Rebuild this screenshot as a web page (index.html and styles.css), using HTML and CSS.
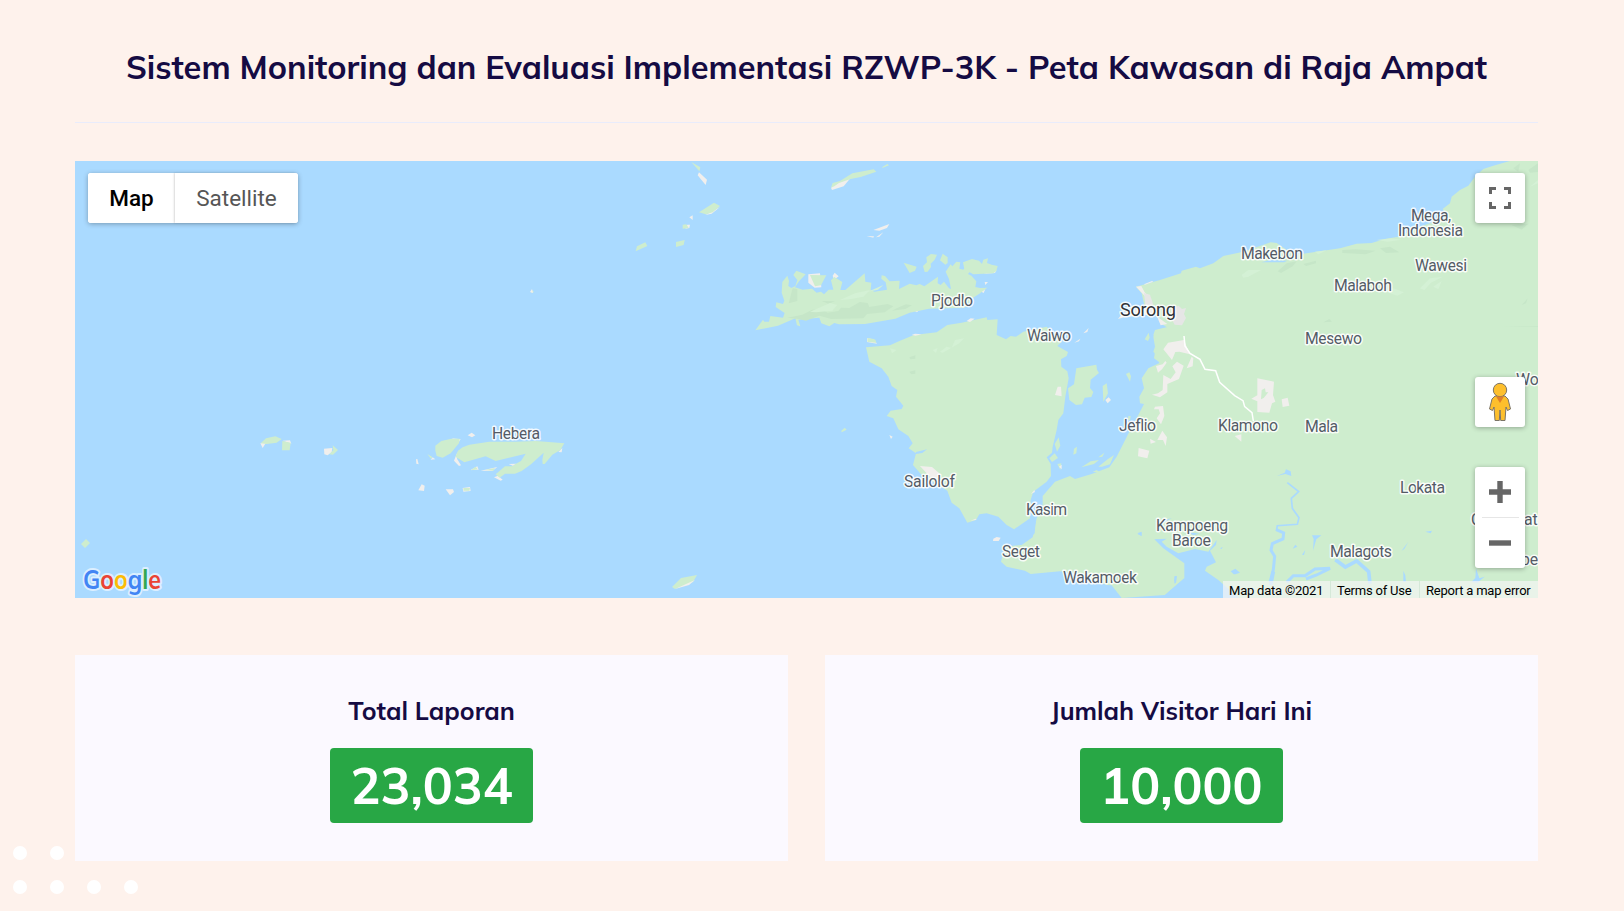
FILE: index.html
```html
<!DOCTYPE html>
<html lang="id">
<head>
<meta charset="utf-8">
<title>Peta Kawasan di Raja Ampat</title>
<link rel="stylesheet" href="styles.css">
</head>
<body>
<div class="dots"><i></i><i></i><i class="off"></i><i class="off"></i><i></i><i></i><i></i><i></i></div>
<main class="page">
  <h1 class="title"><span>Sistem Monitoring dan Evaluasi Implementasi RZWP-3K - Peta Kawasan di Raja Ampat</span></h1>

  <section class="map">
    <svg class="canvas" viewBox="75 161 1463 437" width="1463" height="437">
      <!-- north-western islets and Batanta -->
      <g transform="translate(600 155) scale(.33333)">
        <path class="sand" d="M297 52l24 22-4 16-10-12-14-17zM268 187l10-6v14zM262 209l8 0-2 10-12 2zM693 98l30-20 28-8-20 24-35 11zM820 225l48-18-7 12-23 8zM800 243l22 1-2 4zM828 247l22-15-12 13zM625 358l35-3 4 42-20 1-19-15zM698 362l6-9 12 11-14 10zM1154 381h10l-8 9zM1140 408l16-6-5 12zM940 466l20-4-9 10zM316 180l44-24-25 20zM801 550l20 3 10 13-30-5zM1150 356l35-2 4-8"/>
        <path class="land" d="M274 21l27 16-3 12zM297 172l45-29 18 10-22 19-20 6zM248 209l11-1 7 11-18 2zM228 261l26-6-3 15-23 6zM107 289l4-15 25-12 6 11zM693 98l5-14 22-6 37-23 64-12 8 7-47 16-30 6-35 12-14 10zM847 36l15-9 5 4-20 8zM804 550l22 4 3 9-27-3zM630 360l49 1-16 30-18 3zM911 323l39 12-5 12-16 7z"/>
        <path class="land" d="M466 526l23-32 4 6 14 0 4-17 38 5 5-14-27-18 2-14 20 5 4-10-8-24 2-32 15-19 5 16-2 15 9 6 12-6 6-18-12-15 9-13 28 11-20 21-12 18 23 7 28-3 14 12 13-3 9 8 14-14 14 0-7-28 10-10 24 15-6 24 15 0 58-50 2 25 18 3-2 23 12 4 37-6-4-22-13-11 1-10 10 2 14 16 30-2-2 25 32-16 20 5 10-4 14 7 41-29-1 20 9 5 10-10 15 20 6 2-6-30-10-22 15-22 5 6 12-14 12 2-3 19 12 3 10-14 9 2 3 15-8 10 10 5 15 17-3 17 14 3 22-1-24 18-21 14-24 28-106 3-58 12-43 18-91 16-78 1-14-4-15 10-24-9-6-17-38 3-25 3 6 20-10-3-5-21-52 22zM969 333l12-11-2-15 14-10 18 2-7 15-12 12 1 10-10 14-9 1zM1020 316l8-20 15 11v17l-7 5zM1089 322l27-10 21 5 9 10 4-13 14-4-3 14 14 5 18 4-4 15-9 7-60 3-27-15z"/>
        <path class="shade" d="M578 400l14 2v36l-26 7zM562 488l45-9 30-15 28-1 18 10 32-5 8-10 25 1 31-18 24 3 5 12 55-9 17 7-26 18-53 5-11 13-96 2-36-10-40 15-22-5zM890 460l28-12 18 3-20 11-40 5zM665 438l40 1-20 7z"/>
        <path class="light" d="M630 470l60-26 22 6-15 17-50 5zM720 435l45-20 45-10-20 20-40 8zM850 390l-46 20 30-6z"/>
      </g>
      <!-- western islands -->
      <g transform="translate(240 400) scale(.33333)">
        <path class="sand" d="M61 130l55-8-40 9-8 13zM128 122l22-1 4 10zM252 146l25-2-2 12-12 10-10-3zM683 106l12-8 11 8-10 6zM528 178l4-1 4 16-7-2zM535 271l10-18 9 4-2 16zM617 268l22 0 3 8-12 10zM668 264l22-3 2 12-22 2zM762 232l12-5 14 12-6 3zM642 182l8-20 16-18-12 18-3 14 12 20-6 2zM635 115l27 3-5 7zM578 172l8 6-14 1zM692 210l20-11 4 10zM722 212l50-11-15 12zM806 192l22-1-8 7zM955 156l12-12-2 13z"/>
        <path class="land" d="M62 130l16-15 28-6 19 8-15 11-30 4zM127 123l25 5-3 23-23 0zM268 163l12-13-2-14 16 14-15 14zM586 137l18-14 30-7 25 0-2 14-25 30-24 13-18-5-4-16zM562 162l15 9-4 5zM646 170l8-18 14-10 20-8 60-9 80 0 60-2 85 7-12 20-24 14-23 28-6 0-1-12 4-22-38 35-28 20-20 8-30 0-16 12-12-10 16-14 12-10 22 0 8-6 18-10 14-22-90 22-30-14-64 18zM693 211l14-11 6 8zM735 210l30-6-5 8zM670 264l20 0-2 8-17 0z"/>
      </g>
      <path class="land" d="M81 544l5-5 4 4-5 5zM672 587l9-9 16-3-4 7-18 7zM532 290l2 2-3 1z"/>
      <path class="sand" d="M530 292l2-3 1 4zM675 589l20-9-6 5z"/>

      <!-- northern mainland -->
      <g transform="translate(1100 155) scale(.33333)">
        <path class="land" d="M1320 15H1240L1180 32 1150 42 1125 65 1105 92 1080 105 1055 125 1050 145 1028 162 1045 185 960 215 895 245 855 252 815 264 770 266 720 280 690 284 640 292 600 298 560 285 530 264 512 262 430 290 370 303 340 325 300 340 288 335 245 347 243 355 180 375 108 395 125 415 135 460 180 490 190 510 205 520 170 525 160 545 165 575 160 590 178 610V760H1320z"/>
        <path class="sand" d="M108 395l16-2 10 19 22 25-6 20 14 10 10 20 28 20-20 4-14-34-96 10-18 5 14-18 70-20-3-30zM188 600l12-42 32-6 32-1-5 22 12 25-30 1-28-10-7 30zM132 388l24-10 4 2-25 9z"/>
        <path class="town" d="M132 414l18 5 10 30-24 0zM212 460l24-8 10 10 12-3-6 18 6 12-12 22-22-2-8-15z"/>
        <path class="shade" d="M727 285l40-2 60 4-30 11-70-4zM840 280l30-5 28 17-40 2zM560 325l30-6-12 15-35 20-10-5zM610 327l38-10 0 8-30 8zM1020 530l50-14 38 8 46-2-44 10-50 5zM1180 517l134-4v7l-100 1zM670 502l18-10 8 8zM1265 450l18-20-5 15zM1240 40l20-15-5 25zM1285 45l29-20v26l-24 2zM1235 210l50-4-20 18z"/>
        <path class="light" d="M425 360l20-15 38 0-38 20-15 3zM830 255l45-5 28 4-40 6zM645 290l35-4-25 12zM850 408l30-8 32 12-20 10zM960 400l30-30 38-5-35 18-20 22zM1000 395l25-17-10 25zM1290 95l24-20v10z"/>
        <path class="water" d="M484 322l28-7 50 2-10 5zM985 630l38-22-18 23-20 10zM1085 643l12 25-10-8z"/>
      </g>

      <!-- Salawati, strait and western mainland coast -->
      <g transform="translate(840 300) scale(.33333)">
        <path class="land" d="M78 142L150 136 180 122 222 105 290 97 322 75 365 68 440 52 442 60 473 58 470 105 498 118 512 108 528 110 550 95 620 80 665 125 652 138 684 156 680 168 663 178 664 200 682 214 686 235 676 290 670 340 655 360 650 390 638 440 636 458 620 472 632 492 633 528 620 545 580 575 572 600 570 655 522 688 500 675 475 650 440 640 418 643 408 660 382 668 358 625 335 608 322 572 245 525 219 495 228 460 206 445 218 430 205 408 175 388 160 355 140 348 152 332 185 327 190 317 168 290 172 270 155 258 145 230 125 205 88 185z"/>
        <path class="land" d="M709 205l60-11 2 15 6 10-25 20-2 25 10 12-6 15-20 2-8 20-18 2-20-15-4-35 18-12zM788 258l12-8 4 30-14 25zM858 222l10-5 5 12-3 16zM914 118l12-20 3 15-5 10zM644 432l12-20 5 25-10 18zM628 475l16-15 10 14-18 12zM700 464l2-18 9-6-2 20zM724 502l28-18 25-4-15 12zM775 500l28-22 19-13-12 28-24 7zM775 472l18-14-6 12zM758 516l12-6 8 6zM652 492l12-2-3 20zM4 392l10-9 6 6-15 8zM82 115l20 2 6 10-24-2zM865 348l7 0-2 14-6-4z"/>
        <path class="sand" d="M645 285l8-25 10 0 2 29zM796 300l10-8 7 8-10 10zM730 100l16-16-4 12zM703 128l18-12-4 8zM148 405l10 5-5 7zM240 498l36 3 28 24-10 10-20 0zM380 63l12-8 12 1-14 10zM215 105l10-4 20 2-18 4zM573 582l10-12 2 6zM460 716l10-5 12 2-6 10-17 0zM657 500l8-6 0 14zM392 662l14-6 4 3z"/>
        <path class="water" d="M228 456l33-8-14 11-20 3z"/>
        <path class="shade" d="M208 172l18-6v10l-15 2zM208 215l18-4 0 10-12 2z"/>
        <path class="light" d="M278 150l15-6-5 15zM300 155l20-15 15 4 10-24 28-5-15 15-50 28zM150 145l20 5-14 10z"/>
        <path class="land" d="M985 80L945 90 940 105 950 120 945 155 942 175 960 188 925 205 905 235 912 265 898 290 900 310 912 312 895 345 868 395 830 470 808 502 755 522 705 537 690 528 645 545 608 588 608 615 590 655 578 712 545 735 495 740 483 785 500 800 555 812 572 822 660 814 710 820 800 855 815 856 845 894V900H2100V80z"/>
        <path class="water" d="M845 894L975 885 1033 835 1040 870 1040 900H845zM893 702l12-6 0 12zM1004 828l6 0-2 20-6-6zM570 715l6-30 12-30-4 45z"/>
        <path class="sand" d="M970 148l14-20 48-8 8 20 10 23-32-8-12 1-10 24zM1040 205l15-35 5 5-2 24zM948 198l20-5 8-10 4 5-14 20-12 10zM970 225l22 12 15-20-10-18 14-14 20 12-14 40-35 15 0 25-22 15-24-8 18-4 14-10zM945 320l24-2 4 30-10 25-13-18 10-15-4-12-14 0zM952 420l15-28 14 20-4 26-8-18zM930 416l18 10-16 5zM896 444l32 8-6 23-28-6z"/>
      </g>

      <!-- southern mainland: bay, rivers, settlements -->
      <g transform="translate(1100 350) scale(.33333)">
        <path class="water" d="M163 568L200 566 185 575 200 590 235 610 285 597 325 605 350 570 348 585 330 602 348 637 320 650 315 662 355 690 420 747H195V735L253 685V640L190 595zM112 550l12-5 0 12zM224 680l6-2-2 20-5 3zM392 664l14-8 14 12-14 5-5 0zM530 378l24-10 4-10 14 6 2 14-18-6zM360 595l8-4-3 6zM578 596l8-12 6 6zM606 614l10-14-4 15zM636 556l28 0-15 12-10 34 2-35zM976 545l20-3-4 8zM905 602l20-27-12 22zM910 662l6 14 2 20h-8zM1128 655l10 30 16-5-22 18-18-2 12-12zM165 515l50-10-20 10zM260 545l38 6-18 5z"/>
        <path class="river thin" d="M562 398l34 27-22 20 3 30 20 28-5 20-60 4-3 16"/>
        <path class="river" d="M529 539l22 10-2 18-32 14-4 20 11 18-4 40-10 38M560 697l20-20 35 0 30-20 45-2-40 20-32 12"/>
        <path class="river wide" d="M706 629l30 22 34-18 36 32 4 36M520 665l-8 40"/>
        <path class="sand" d="M472 85l50 10-3 40 7 20-10 5-8 28-36-2 0-32-18-8 18-10zM545 148l18-5 5 24-20 4zM404 258l20-5 0 22z"/>
        <path class="land" d="M485 120l10-5 2 12 8 0-14 17-8 4zM250 592l60-20 15 10-60 15z"/>
        <path class="road" d="M252-42l3 30 15 22 30 18 15 30 32 4 12 35 45 40 25 15 5 18 22 18 4 25"/>
      </g>

      <g class="labels">
        <text x="931" y="306" textLength="42">Pjodlo</text>
        <text x="1027" y="341" textLength="44">Waiwo</text>
        <text x="492" y="439" textLength="48">Hebera</text>
        <text x="904" y="487" textLength="51">Sailolof</text>
        <text x="1026" y="515" textLength="41">Kasim</text>
        <text x="1002" y="557" textLength="38">Seget</text>
        <text x="1063" y="583" textLength="74">Wakamoek</text>
        <text x="1119" y="431" textLength="37">Jeflio</text>
        <text x="1218" y="431" textLength="60">Klamono</text>
        <text x="1305" y="432" textLength="33">Mala</text>
        <text x="1156" y="531" textLength="72">Kampoeng</text>
        <text x="1172" y="546" textLength="39">Baroe</text>
        <text x="1330" y="557" textLength="62">Malagots</text>
        <text x="1400" y="493" textLength="45">Lokata</text>
        <text x="1305" y="344" textLength="57">Mesewo</text>
        <text x="1334" y="291" textLength="58">Malaboh</text>
        <text x="1415" y="271" textLength="52">Wawesi</text>
        <text x="1241" y="259" textLength="62">Makebon</text>
        <text x="1411" y="221" textLength="40">Mega,</text>
        <text x="1398" y="236" textLength="65">Indonesia</text>
        <text x="1516" y="385">Wo</text>
        <text x="1471" y="525">C</text>
        <text x="1524" y="525">ate</text>
        <text x="1521" y="565">be</text>
        <text class="city" x="1120" y="316" textLength="56">Sorong</text>
      </g>
      <text class="logo" x="83" y="589" textLength="78" lengthAdjust="spacingAndGlyphs"><tspan fill="#4285f4">G</tspan><tspan fill="#ea4335">o</tspan><tspan fill="#fbbc05">o</tspan><tspan fill="#4285f4">g</tspan><tspan fill="#34a853">l</tspan><tspan fill="#ea4335">e</tspan></text>
    </svg>

    <div class="types"><button class="type active">Map</button><button class="type">Satellite</button></div>
    <div class="tools">
      <button class="tool"><svg width="22" height="22" viewBox="0 0 22 22"><path fill="none" stroke="#666" stroke-width="3" d="M1.5 7V1.5H7M15 1.5h5.500V7M20.500 15v5.500H15M7 20.500H1.500V15"/></svg></button>
      <button class="tool pegman"><svg width="24" height="40" viewBox="0 0 24 40"><g fill="#fdbf2d" stroke="#7b7467" stroke-width="1"><path d="M7 14h10l3 3 2.500 10-3 1.500L18 25l-1 13.500h-4.300L12 28l-.7 10.500H7L6 25l-1.500 3.500-3-1.500L4 17z"/><circle cx="12" cy="8" r="6.700"/></g><path fill="#e07f28" d="M8 14.500h8l-4 6.500z"/></svg></button>
      <div class="zoom">
        <button class="step"><svg width="22" height="22" viewBox="0 0 22 22"><path fill="#666" d="M8.300 0h5.400v8.300H22v5.400h-8.300V22H8.300v-8.300H0V8.300h8.300z"/></svg></button>
        <button class="step"><svg width="22" height="22" viewBox="0 0 22 22"><path fill="#666" d="M0 8.300h22v5.400H0z"/></svg></button>
      </div>
    </div>
    <div class="credits"><span>Map data ©2021</span><span>Terms of Use</span><span>Report a map error</span></div>
  </section>

  <section class="cards">
    <article class="card"><h2 class="name">Total Laporan</h2><strong class="badge">23,034</strong></article>
    <article class="card"><h2 class="name">Jumlah Visitor Hari Ini</h2><strong class="badge">10,000</strong></article>
  </section>
</main>
</body>
</html>
```

FILE: styles.css
```css
* { box-sizing: border-box; }
body { margin: 0; height: 911px; overflow: hidden; position: relative; background: #fef2ec; color: #150b43; font-family: Mulish, Muli, Nunito, Lato, sans-serif; }
.page { position: relative; width: 1463px; margin-left: 75px; }
.title { margin: 0; height: 123px; padding-top: 43px; border-bottom: 1px solid #e9ecfb; font-size: 32.500px; line-height: 48px; font-weight: 700; text-align: center; white-space: nowrap; }
.map { position: relative; height: 437px; margin-top: 38px; overflow: hidden; background: #aadaff; font-family: Roboto, sans-serif; }
.canvas { display: block; }
.land { fill: #ceedce; }
.sand { fill: #f1efed; }
.town { fill: #e6e6e6; }
.shade { fill: #c6e6c8; }
.light { fill: #d4f1d5; }
.water { fill: #aadaff; }
.river { fill: none; stroke: #aadaff; stroke-width: 9; }
.thin { stroke-width: 5; }
.wide { stroke-width: 11; }
.road { fill: none; stroke: #fff; stroke-width: 4.500; }
.labels { font-size: 15.800px; fill: #545b66; stroke: #fff; stroke-width: 3px; stroke-opacity: .85; stroke-linejoin: round; paint-order: stroke; }
.city { font-size: 18.200px; fill: #303338; }
.logo { font-family: Mulish, Lato, sans-serif; font-size: 26px; font-weight: 700; stroke: #dcefff; stroke-width: 4px; stroke-linejoin: round; paint-order: stroke; }
button { margin: 0; padding: 0; border: 0; background: #fff; font-family: inherit; }
.types { position: absolute; left: 13px; top: 12px; display: flex; width: 210px; height: 50px; border-radius: 3px; background: #fff; box-shadow: 0 1px 5px rgba(0,0,0,.3); }
.type { flex: 1; padding-bottom: 1px; border-radius: 0 3px 3px 0; font-size: 22.500px; color: #565656; box-shadow: -1px 0 2px rgba(0,0,0,.15); }
.type.active { flex: 0 0 87px; border-radius: 3px 0 0 3px; color: #000; font-weight: 500; box-shadow: none; }
.tools { position: absolute; right: 13px; top: 12px; width: 50px; }
.tool, .zoom { display: flex; align-items: center; justify-content: center; width: 50px; height: 50px; border-radius: 3px; background: #fff; box-shadow: 0 1px 5px rgba(0,0,0,.3); }
.pegman { margin-top: 154px; }
.zoom { flex-direction: column; height: 101px; margin-top: 40px; }
.step { display: flex; align-items: center; justify-content: center; width: 37px; height: 50px; background: none; }
.step + .step { height: 51px; border-top: 1px solid #e6e6e6; }
.credits { position: absolute; right: 0; bottom: 0; display: flex; width: 315px; height: 17px; background: rgba(245,245,245,.7); color: #000; font-size: 13px; line-height: 19px; letter-spacing: -.22px; white-space: nowrap; }
.credits span { padding-left: 6px; width: 107px; }
.credits span + span { width: 89px; border-left: 1px solid #d5e8d8; }
.credits span:last-child { width: 119px; }
.cards { display: grid; grid-template-columns: 1fr 1fr; gap: 36.500px; margin-top: 57px; }
.card { height: 206px; display: flex; flex-direction: column; align-items: center; padding-top: 38px; background: #fbf9ff; }
.name { margin: 0; font-size: 25px; line-height: 36px; font-weight: 700; }
.badge { display: block; width: 203px; height: 75px; margin-top: 19px; border-radius: 4px; background: #28a745; color: #fff; font-size: 50px; line-height: 76px; font-weight: 700; text-align: center; }
.dots { position: absolute; left: 13px; top: 846px; display: grid; grid-template-columns: repeat(4, 14px); gap: 20px 22.900px; }
.dots i { width: 14px; height: 14px; border-radius: 50%; background: #fff; }
.dots .off { visibility: hidden; }
```
